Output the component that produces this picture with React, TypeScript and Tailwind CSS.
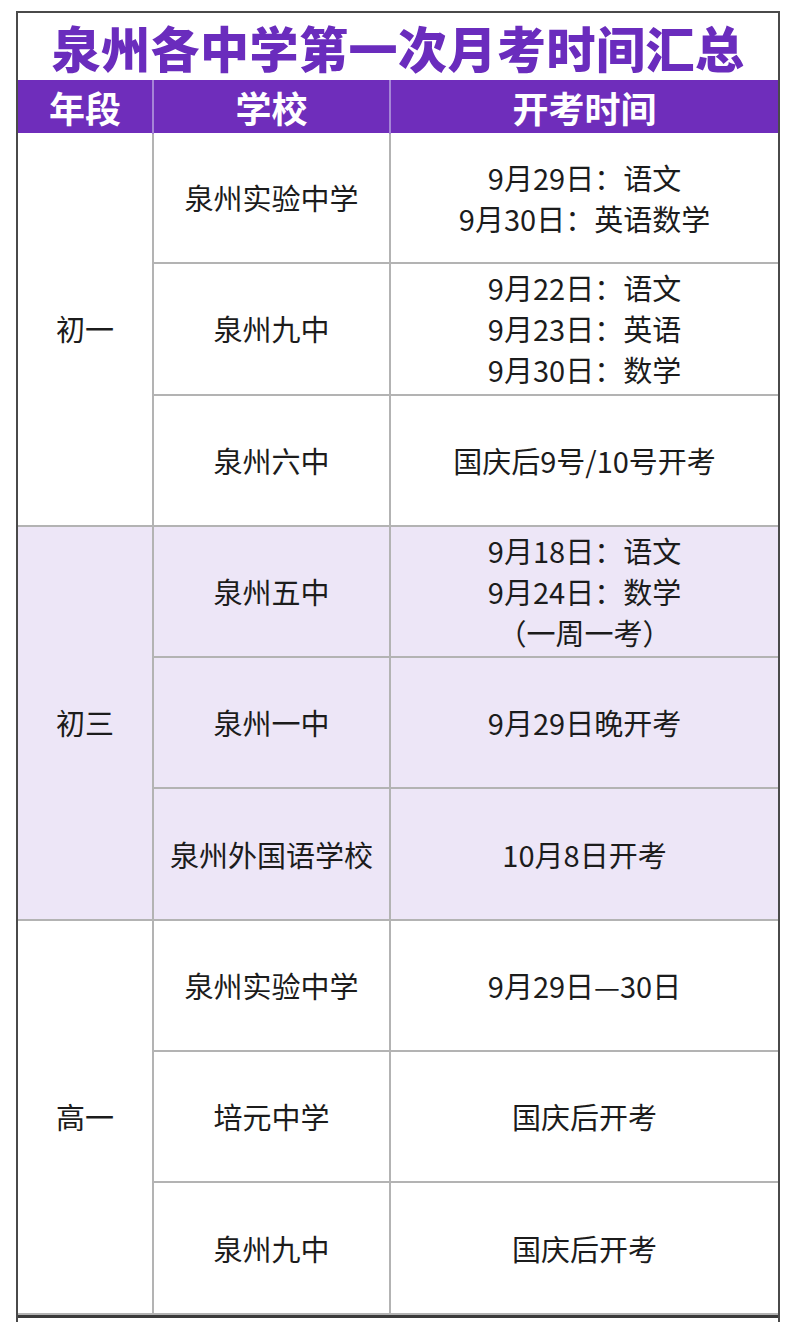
const font = { fontFamily: '"Noto Sans CJK SC", "Noto Sans", sans-serif' };

type Row = { school: string; times: string[] };
type Group = { grade: string; tinted: boolean; rows: Row[] };

const groups: Group[] = [
  {
    grade: "初一",
    tinted: false,
    rows: [
      { school: "泉州实验中学", times: ["9月29日：语文", "9月30日：英语数学"] },
      { school: "泉州九中", times: ["9月22日：语文", "9月23日：英语", "9月30日：数学"] },
      { school: "泉州六中", times: ["国庆后9号/10号开考"] },
    ],
  },
  {
    grade: "初三",
    tinted: true,
    rows: [
      { school: "泉州五中", times: ["9月18日：语文", "9月24日：数学", "（一周一考）"] },
      { school: "泉州一中", times: ["9月29日晚开考"] },
      { school: "泉州外国语学校", times: ["10月8日开考"] },
    ],
  },
  {
    grade: "高一",
    tinted: false,
    rows: [
      { school: "泉州实验中学", times: ["9月29日—30日"] },
      { school: "培元中学", times: ["国庆后开考"] },
      { school: "泉州九中", times: ["国庆后开考"] },
    ],
  },
];

export default function App() {
  return (
    <div className="min-h-[1322px] w-[795px] overflow-hidden bg-white pl-4 pt-[11px]" style={font}>
      <div className="w-[764px] border-2 border-b-0 border-[#4a4a4a]">
        <div className="flex h-[67px] items-center justify-center text-[49px] font-black tracking-[0.5px] text-[#6a2cbd]">
          泉州各中学第一次月考时间汇总
        </div>
        <div className="grid h-[53px] grid-cols-[134px_237px_1fr] bg-[#6f2dbb] text-[36px] font-bold text-white">
          <div className="flex items-center justify-center">年段</div>
          <div className="flex items-center justify-center border-l-2 border-[#a584d6]">学校</div>
          <div className="flex items-center justify-center border-l-2 border-[#a584d6]">开考时间</div>
        </div>
        <div className="grid grid-cols-[134px_235px_1fr] gap-[2px] bg-[#b3b3b3] text-[29px] leading-[41px] text-[#1c1c1c]">
          {groups.map((g) => {
            const bg = g.tinted ? "bg-[#ede6f7]" : "bg-white";
            return [
              <div key={g.grade} className={`row-span-3 flex items-center justify-center ${bg}`}>{g.grade}</div>,
              ...g.rows.flatMap((r, i) => [
                <div key={g.grade + "s" + i} className={`flex h-[129.3px] items-center justify-center ${bg}`}>{r.school}</div>,
                <div key={g.grade + "t" + i} className={`flex h-[129.3px] flex-col items-center justify-center ${bg}`}>
                  {r.times.map((t) => <div key={t}>{t}</div>)}
                </div>,
              ]),
            ];
          })}
        </div>
        <div className="h-[2px] bg-[#b3b3b3]" />
        <div className="h-[3px] bg-[#3a3a3a]" />
        <div className="h-[20px] bg-white" />
      </div>
    </div>
  );
}
